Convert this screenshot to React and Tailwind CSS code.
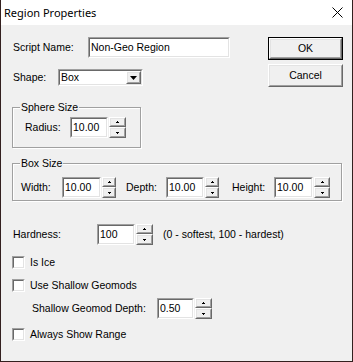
import React from "react";

function Sunken({ className, children }) {
  return (
    <div className={"border-t border-l border-b border-r border-t-[#a0a0a0] border-l-[#a0a0a0] border-b-white border-r-white " + className}>
      <div className="h-full w-full border border-t-[#696969] border-l-[#696969] border-b-[#e3e3e3] border-r-[#e3e3e3] bg-white flex items-center">
        {children}
      </div>
    </div>
  );
}

function Raised({ className, children }) {
  return (
    <div className={"border border-t-white border-l-white border-b-[#696969] border-r-[#696969] " + className}>
      <div className="h-full w-full border border-t-[#e3e3e3] border-l-[#e3e3e3] border-b-[#a0a0a0] border-r-[#a0a0a0] bg-[#f0f0f0] flex items-center justify-center">
        {children}
      </div>
    </div>
  );
}

function Up() {
  return (
    <svg width="3" height="2" className="block">
      <rect x="1" y="0" width="1" height="1" fill="#000" />
      <rect x="0" y="1" width="3" height="1" fill="#000" />
    </svg>
  );
}

function Down() {
  return (
    <svg width="3" height="2" className="block">
      <rect x="0" y="0" width="3" height="1" fill="#000" />
      <rect x="1" y="1" width="1" height="1" fill="#000" />
    </svg>
  );
}

function Spin({ className }) {
  return (
    <div className={"flex flex-col h-[21px] ml-[1px] " + className}>
      <Raised className="h-[10px] w-full">
        <Up />
      </Raised>
      <Raised className="h-[11px] w-full">
        <Down />
      </Raised>
    </div>
  );
}

function Check({ label }) {
  return (
    <div className="flex items-center h-[13px]">
      <Sunken className="w-[13px] h-[13px]" />
      <span className="ml-[5px]">{label}</span>
    </div>
  );
}

export default function App() {
  return (
    <div className="w-[353px] h-[362px] bg-[#f0f0f0] border-x border-b border-[#33201f] flex flex-col font-['Liberation_Sans',Arial,sans-serif] text-[10.5px] leading-[13px] text-black">
      <div className="h-[25px] shrink-0 bg-white flex items-center justify-between pl-[3px] pr-[9px]">
        <span className="font-['Noto_Sans',sans-serif] text-[11px] leading-[14px]">Region Properties</span>
        <svg width="11" height="11" className="block">
          <path d="M0.5 0.5 L10.5 10.5 M10.5 0.5 L0.5 10.5" stroke="#000" strokeWidth="1" />
        </svg>
      </div>

      <div className="flex flex-col pl-[11px] pt-[12px]">
        <div className="flex justify-between pr-[9px]">
          <div className="flex flex-col">
            <div className="flex items-center h-[21px]">
              <span className="w-[76px] pl-[1px]">Script Name:</span>
              <Sunken className="w-[142px] h-[21px]">
                <span className="pl-[1px]">Non-Geo Region</span>
              </Sunken>
            </div>
            <div className="flex items-center h-[17px] mt-[11px]">
              <span className="w-[46px] pl-[1px]">Shape:</span>
              <Sunken className="w-[85px] h-[17px]">
                <span className="pl-[1px] flex-1">Box</span>
                <Raised className="w-[15px] h-full">
                  <svg width="7" height="4" className="block">
                    <polygon points="0,0 7,0 3.5,4" fill="#000" />
                  </svg>
                </Raised>
              </Sunken>
            </div>
          </div>
          <div className="flex flex-col gap-[4px]">
            <div className="w-[75px] h-[23px] border border-black">
              <Raised className="w-full h-full">OK</Raised>
            </div>
            <Raised className="w-[75px] h-[23px]">Cancel</Raised>
          </div>
        </div>

        <div className="relative mt-[20px] w-[129px] h-[41px] border border-[#a0a0a0] shadow-[inset_1px_1px_0_#fff,1px_1px_0_#fff]">
          <span className="absolute left-[7px] top-[-7px] px-[1px] bg-[#f0f0f0]">Sphere Size</span>
          <div className="flex items-center pt-[9px] pl-[12px]">
            <span className="w-[45px]">Radius:</span>
            <Sunken className="w-[38px] h-[21px]">
              <span className="pl-[1px]">10.00</span>
            </Sunken>
            <Spin className="w-[17px]" />
          </div>
        </div>

        <div className="relative mt-[15px] w-[330px] h-[38px] border border-[#a0a0a0] shadow-[inset_1px_1px_0_#fff,1px_1px_0_#fff]">
          <span className="absolute left-[7px] top-[-7px] px-[1px] bg-[#f0f0f0]">Box Size</span>
          <div className="flex items-center pt-[13px] pl-[8px]">
            <span className="w-[41px]">Width:</span>
            <Sunken className="w-[39px] h-[21px]">
              <span className="pl-[1px]">10.00</span>
            </Sunken>
            <Spin className="w-[14px]" />
            <span className="w-[40px] ml-[10px]">Depth:</span>
            <Sunken className="w-[38px] h-[21px]">
              <span className="pl-[1px]">10.00</span>
            </Sunken>
            <Spin className="w-[14px]" />
            <span className="w-[42px] ml-[13px]">Height:</span>
            <Sunken className="w-[39px] h-[21px]">
              <span className="pl-[1px]">10.00</span>
            </Sunken>
            <Spin className="w-[16px]" />
          </div>
        </div>

        <div className="flex items-center h-[21px] mt-[23px]">
          <span className="w-[85px] pl-[1px]">Hardness:</span>
          <Sunken className="w-[38px] h-[21px]">
            <span className="pl-[1px]">100</span>
          </Sunken>
          <Spin className="w-[17px]" />
          <span className="ml-[10px]">(0 - softest, 100 - hardest)</span>
        </div>

        <div className="mt-[11px]">
          <Check label="Is Ice" />
        </div>
        <div className="mt-[10px]">
          <Check label="Use Shallow Geomods" />
        </div>

        <div className="flex items-center h-[21px] mt-[6px] pl-[20px]">
          <span className="w-[125px]">Shallow Geomod Depth:</span>
          <Sunken className="w-[37px] h-[21px]">
            <span className="pl-[1px]">0.50</span>
          </Sunken>
          <Spin className="w-[17px]" />
        </div>

        <div className="mt-[9px]">
          <Check label="Always Show Range" />
        </div>
      </div>
    </div>
  );
}
